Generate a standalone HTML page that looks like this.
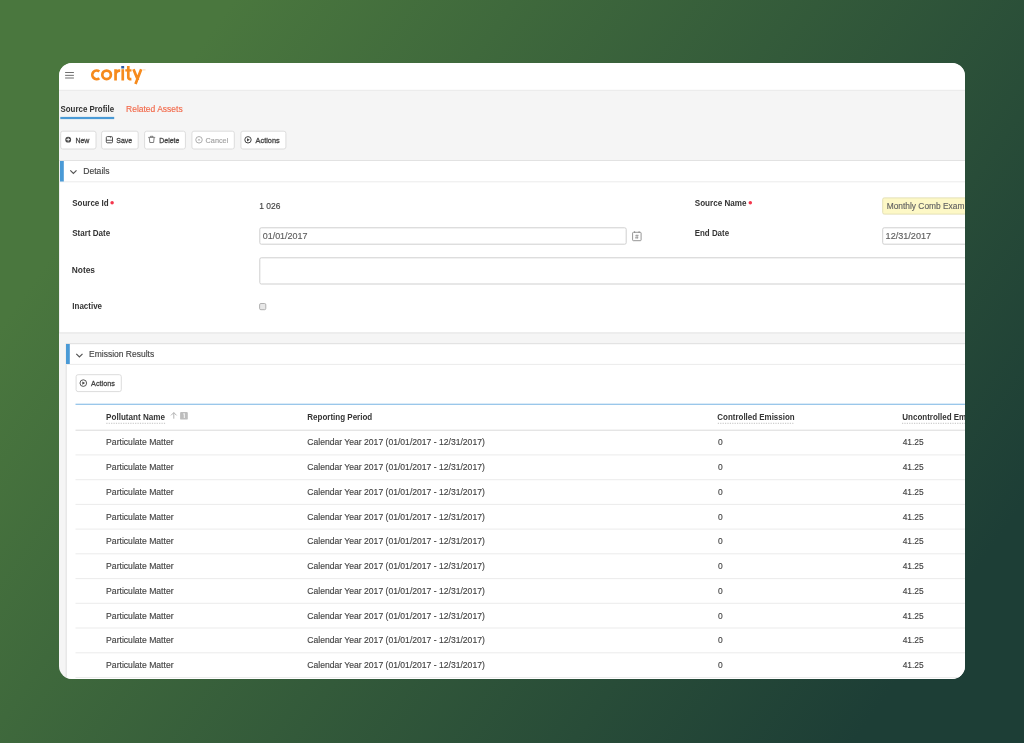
<!DOCTYPE html>
<html><head><meta charset="utf-8">
<style>
html,body{margin:0;padding:0;width:1024px;height:743px;overflow:hidden}
body{background:linear-gradient(125.5deg,#4a773e 15%,#1d3e36 89%);font-family:"Liberation Sans",sans-serif;position:relative}
#card{position:absolute;left:59px;top:63px;width:906px;height:616px;border-radius:13px;overflow:hidden;background:#f5f5f5}
#in{filter:blur(0.35px);position:absolute;left:-59px;top:-63px;width:1024px;height:743px}
#in svg{position:absolute;left:0;top:0}
.t{position:absolute;white-space:pre;line-height:1;transform-origin:0 50%;display:block}
</style></head><body>
<div id="card"><div id="in">
<svg width="1024" height="743" viewBox="0 0 1024 743">
<!-- header -->
<rect x="59" y="63" width="906" height="27" fill="#fff"/>
<rect x="59" y="89.8" width="906" height="0.9" fill="#e8e8e8"/>
<!-- hamburger -->
<g fill="#707070"><rect x="65.1" y="72" width="8.8" height="1"/><rect x="65.1" y="74.85" width="8.8" height="1"/><rect x="65.1" y="77.5" width="8.8" height="1"/></g>
<!-- logo -->
<g id="logo" fill="none" stroke="#f68a1c" stroke-width="2.7" stroke-linecap="butt">
<path d="M99.3 71.5 A4.3 4.3 0 1 0 99.3 78.2"/>
<circle cx="106.6" cy="74.85" r="4.3"/>
<path d="M115.55 80.5 V69.2 M115.55 74.8 Q115.7 70.5 120.2 70.7"/>
<path d="M122.75 80.5 V69.2"/>
<path d="M128.3 66.1 V77.4 Q128.3 79.3 131.4 79.1"/>
<path d="M125.3 70.4 H131.5" stroke-width="2.3"/>
<path d="M133.5 69.2 L138 80.3 M141.2 69.2 L135.5 83.9"/>
</g>
<rect x="121.25" y="66" width="2.9" height="2.5" fill="#2d5aa6"/>
<rect x="142.9" y="69.3" width="2.6" height="1.2" fill="#f68a1c" opacity="0.3"/>
<!-- tab underline -->
<rect x="60.3" y="116.9" width="53.9" height="2.2" fill="#4a9ad6"/>
<!-- toolbar buttons -->
<g fill="#fff" stroke="#dcdcdc" stroke-width="1">
<rect x="60.7" y="131.2" width="35.3" height="17.8" rx="2"/>
<rect x="101.6" y="131.2" width="36.6" height="17.8" rx="2"/>
<rect x="144.6" y="131.2" width="40.8" height="17.8" rx="2"/>
<rect x="191.9" y="131.2" width="42.4" height="17.8" rx="2"/>
<rect x="240.9" y="131.2" width="45" height="17.8" rx="2"/>
</g>
<!-- new icon -->
<circle cx="68.2" cy="139.65" r="2.9" fill="#4a4a4a"/>
<path d="M66.4 139.6 H70 M68.2 137.8 V141.4" stroke="#fff" stroke-width="0.9"/>
<!-- save icon -->
<g fill="none" stroke="#505050" stroke-width="1">
<rect x="106.3" y="136.6" width="6.2" height="6.2" rx="1"/>
<path d="M106.3 140.3 H112.5" stroke-width="0.9"/>
<path d="M110.7 136.6 V138.2" stroke-width="0.8"/>
</g>
<!-- trash icon -->
<g fill="none" stroke="#555" stroke-width="0.75">
<path d="M148.2 137.4 H155.2 M150.4 137.2 V136.3 H153 V137.2"/>
<path d="M149.3 138 L149.8 142.5 H153.6 L154.1 138"/>
</g>
<!-- cancel icon -->
<circle cx="199" cy="139.8" r="3.25" fill="none" stroke="#adadad" stroke-width="1"/>
<path d="M198.1 138.9 L199.9 140.7 M199.9 138.9 L198.1 140.7" stroke="#adadad" stroke-width="0.8"/>
<!-- actions icon -->
<circle cx="248" cy="139.8" r="3.2" fill="none" stroke="#444" stroke-width="1"/>
<path d="M247 138.2 L249.8 139.8 L247 141.4 Z" fill="#444"/>
<!-- details panel -->
<rect x="59" y="160.5" width="920" height="172.4" fill="#fff" stroke="#e2e2e2" stroke-width="1"/>
<rect x="59" y="181.3" width="920" height="1" fill="#ececec"/>
<rect x="60" y="161" width="3.8" height="20.5" fill="#4a9ad6"/>
<path d="M70.3 170.3 L73.4 173.4 L76.5 170.3" fill="none" stroke="#555" stroke-width="1.2"/>
<!-- asterisks -->
<g fill="#f4364c"><circle cx="112.1" cy="202.7" r="1.75"/><circle cx="750.3" cy="202.7" r="1.75"/></g>
<!-- inputs -->
<g fill="#fff" stroke="#cfcfcf" stroke-width="1">
<rect x="259.8" y="227.8" width="366.4" height="16.4" rx="1.5"/>
<rect x="259.8" y="257.8" width="720" height="26.2" rx="1.5"/>
<rect x="882.7" y="227.8" width="100" height="16.4" rx="1.5"/>
</g>
<rect x="882.7" y="197.9" width="100" height="16.2" rx="1.5" fill="#fdf8c6" stroke="#e4e0b6" stroke-width="1"/>
<!-- calendar icon -->
<g fill="none" stroke="#8a8a8a" stroke-width="0.9">
<rect x="632.6" y="232.3" width="8.5" height="8.4" rx="0.8"/>
<path d="M634.6 231.2 V233 M639.1 231.2 V233"/>
<path d="M635.3 235.6 H638.6 M635.1 237.7 H638.4 M636.4 234.6 L636 238.8 M637.8 234.6 L637.4 238.8" stroke-width="0.6"/>
</g>
<!-- checkbox -->
<rect x="259.6" y="303.5" width="6.2" height="6.2" rx="1.3" fill="#e8e8e8" stroke="#a8a8a8" stroke-width="0.9"/>
<!-- emission panel -->
<rect x="66.2" y="343.7" width="920" height="345" fill="#fff" stroke="#dedede" stroke-width="1"/>
<rect x="66.2" y="363.9" width="920" height="1" fill="#ececec"/>
<rect x="66" y="344" width="3.8" height="20" fill="#4a9ad6"/>
<path d="M76.3 353.8 L79.4 356.9 L82.5 353.8" fill="none" stroke="#555" stroke-width="1.2"/>
<rect x="76.1" y="374.7" width="45.2" height="16.9" rx="2" fill="#fff" stroke="#dcdcdc"/>
<circle cx="83.3" cy="383.1" r="3.3" fill="none" stroke="#444" stroke-width="0.9"/>
<path d="M82.3 381.5 L85.1 383.1 L82.3 384.7 Z" fill="#444"/>
<!-- table -->
<rect x="75.5" y="403.75" width="920" height="0.95" fill="#70b0e1"/>
<rect x="75.5" y="429.7" width="920" height="1" fill="#dadada"/>
<g fill="#ececec">
<rect x="75.5" y="454.4" width="920" height="1"/>
<rect x="75.5" y="479.2" width="920" height="1"/>
<rect x="75.5" y="503.9" width="920" height="1"/>
<rect x="75.5" y="528.6" width="920" height="1"/>
<rect x="75.5" y="553.3" width="920" height="1"/>
<rect x="75.5" y="578.1" width="920" height="1"/>
<rect x="75.5" y="602.8" width="920" height="1"/>
<rect x="75.5" y="627.5" width="920" height="1"/>
<rect x="75.5" y="652.3" width="920" height="1"/>
<rect x="75.5" y="677" width="920" height="1"/>
</g>
<!-- dotted underlines -->
<g stroke="#a8a8a8" stroke-width="0.7" stroke-dasharray="1.2 1.2">
<path d="M106.3 423.3 H165.8"/><path d="M717.8 423.3 H794.2"/><path d="M902 423.3 H1000"/>
</g>
<!-- sort arrow + badge -->
<path d="M173.8 418.7 V412.6 M171 415.4 L173.8 412.6 L176.6 415.4" fill="none" stroke="#aaa" stroke-width="0.9"/>
<rect x="180.1" y="411.9" width="7.7" height="7.7" rx="1.2" fill="#bdbdbd"/>
<path d="M183.3 414 L184.3 413.5 V418" fill="none" stroke="#fff" stroke-width="0.9"/>
</svg>
<span class="t" style="left:60px;top:105px;font-size:9px;font-weight:700;color:#333;transform:translateX(0.49px) scaleX(0.8777);">Source Profile</span>
<span class="t" style="left:126px;top:105px;font-size:9px;color:#f2694a;transform:translateX(0.07px) scaleX(0.9423);-webkit-text-stroke:0.15px #f2694a;">Related Assets</span>
<span class="t" style="left:75px;top:137px;font-size:8px;color:#444;transform:translateX(0.39px) scaleX(0.8716);-webkit-text-stroke:0.3px #444;">New</span>
<span class="t" style="left:116px;top:137px;font-size:8px;color:#444;transform:translateX(0.32px) scaleX(0.8689);-webkit-text-stroke:0.3px #444;">Save</span>
<span class="t" style="left:159px;top:137px;font-size:8px;color:#444;transform:translateX(0.32px) scaleX(0.8663);-webkit-text-stroke:0.3px #444;">Delete</span>
<span class="t" style="left:205px;top:137px;font-size:8px;color:#a2a2a2;transform:translateX(0.59px) scaleX(0.9106);-webkit-text-stroke:0.15px #a2a2a2;">Cancel</span>
<span class="t" style="left:255px;top:137px;font-size:8px;color:#444;transform:translateX(0.56px) scaleX(0.9189);-webkit-text-stroke:0.3px #444;">Actions</span>
<span class="t" style="left:83px;top:167px;font-size:9px;color:#444;transform:translateX(0.26px) scaleX(0.9538);-webkit-text-stroke:0.15px #444;">Details</span>
<span class="t" style="left:72px;top:199px;font-size:9px;font-weight:700;color:#333;transform:translateX(0.19px) scaleX(0.8879);">Source Id</span>
<span class="t" style="left:72px;top:229px;font-size:9px;font-weight:700;color:#333;transform:translateX(0.25px) scaleX(0.8929);">Start Date</span>
<span class="t" style="left:71px;top:266px;font-size:9px;font-weight:700;color:#333;transform:translateX(0.72px) scaleX(0.9303);">Notes</span>
<span class="t" style="left:72px;top:302px;font-size:9px;font-weight:700;color:#333;transform:translateX(0.32px) scaleX(0.8868);">Inactive</span>
<span class="t" style="left:259px;top:202px;font-size:9px;color:#444;transform:translateX(0.20px) scaleX(0.9386);-webkit-text-stroke:0.15px #444;">1 026</span>
<span class="t" style="left:262px;top:232px;font-size:9px;color:#606060;transform:translateX(0.68px) scaleX(0.9953);-webkit-text-stroke:0.15px #606060;">01/01/2017</span>
<span class="t" style="left:694px;top:199px;font-size:9px;font-weight:700;color:#333;transform:translateX(0.73px) scaleX(0.8989);">Source Name</span>
<span class="t" style="left:694px;top:229px;font-size:9px;font-weight:700;color:#333;transform:translateX(0.72px) scaleX(0.8802);">End Date</span>
<span class="t" style="left:886px;top:202px;font-size:9px;color:#626262;transform:translateX(0.73px) scaleX(0.9302);-webkit-text-stroke:0.15px #626262;">Monthly Comb Exam</span>
<span class="t" style="left:885px;top:232px;font-size:9px;color:#606060;transform:translateX(0.57px) scaleX(1.0101);-webkit-text-stroke:0.15px #606060;">12/31/2017</span>
<span class="t" style="left:89px;top:350px;font-size:9px;color:#444;transform:translateX(0.04px) scaleX(0.9442);-webkit-text-stroke:0.15px #444;">Emission Results</span>
<span class="t" style="left:91px;top:380px;font-size:8px;color:#444;transform:translateX(0.05px) scaleX(0.9055);-webkit-text-stroke:0.3px #444;">Actions</span>
<span class="t" style="left:106px;top:413px;font-size:9px;font-weight:700;color:#333;transform:translateX(0.11px) scaleX(0.8982);">Pollutant Name</span>
<span class="t" style="left:307px;top:413px;font-size:9px;font-weight:700;color:#333;transform:translateX(0.28px) scaleX(0.8892);">Reporting Period</span>
<span class="t" style="left:717px;top:413px;font-size:9px;font-weight:700;color:#333;transform:translateX(0.35px) scaleX(0.8827);">Controlled Emission</span>
<span class="t" style="left:902px;top:413px;font-size:9px;font-weight:700;color:#333;transform:translateX(0.29px) scaleX(0.8873);">Uncontrolled Em</span>
<span class="t" style="left:106px;top:438px;font-size:9px;color:#444;transform:translateX(0.11px) scaleX(0.9559);-webkit-text-stroke:0.15px #444;">Particulate Matter</span>
<span class="t" style="left:307px;top:438px;font-size:9px;color:#444;transform:translateX(0.30px) scaleX(0.9535);-webkit-text-stroke:0.15px #444;">Calendar Year 2017 (01/01/2017 - 12/31/2017)</span>
<span class="t" style="left:718px;top:438px;font-size:9px;color:#444;transform:translateX(0.04px) scaleX(0.9400);-webkit-text-stroke:0.15px #444;">0</span>
<span class="t" style="left:902px;top:438px;font-size:9px;color:#444;transform:translateX(0.65px) scaleX(0.9303);-webkit-text-stroke:0.15px #444;">41.25</span>
<span class="t" style="left:106px;top:463px;font-size:9px;color:#444;transform:translateX(0.11px) scaleX(0.9559);-webkit-text-stroke:0.15px #444;">Particulate Matter</span>
<span class="t" style="left:307px;top:463px;font-size:9px;color:#444;transform:translateX(0.30px) scaleX(0.9535);-webkit-text-stroke:0.15px #444;">Calendar Year 2017 (01/01/2017 - 12/31/2017)</span>
<span class="t" style="left:718px;top:463px;font-size:9px;color:#444;transform:translateX(0.04px) scaleX(0.9400);-webkit-text-stroke:0.15px #444;">0</span>
<span class="t" style="left:902px;top:463px;font-size:9px;color:#444;transform:translateX(0.65px) scaleX(0.9303);-webkit-text-stroke:0.15px #444;">41.25</span>
<span class="t" style="left:106px;top:488px;font-size:9px;color:#444;transform:translateX(0.11px) scaleX(0.9559);-webkit-text-stroke:0.15px #444;">Particulate Matter</span>
<span class="t" style="left:307px;top:488px;font-size:9px;color:#444;transform:translateX(0.30px) scaleX(0.9535);-webkit-text-stroke:0.15px #444;">Calendar Year 2017 (01/01/2017 - 12/31/2017)</span>
<span class="t" style="left:718px;top:488px;font-size:9px;color:#444;transform:translateX(0.04px) scaleX(0.9400);-webkit-text-stroke:0.15px #444;">0</span>
<span class="t" style="left:902px;top:488px;font-size:9px;color:#444;transform:translateX(0.65px) scaleX(0.9303);-webkit-text-stroke:0.15px #444;">41.25</span>
<span class="t" style="left:106px;top:513px;font-size:9px;color:#444;transform:translateX(0.11px) scaleX(0.9559);-webkit-text-stroke:0.15px #444;">Particulate Matter</span>
<span class="t" style="left:307px;top:513px;font-size:9px;color:#444;transform:translateX(0.30px) scaleX(0.9535);-webkit-text-stroke:0.15px #444;">Calendar Year 2017 (01/01/2017 - 12/31/2017)</span>
<span class="t" style="left:718px;top:513px;font-size:9px;color:#444;transform:translateX(0.04px) scaleX(0.9400);-webkit-text-stroke:0.15px #444;">0</span>
<span class="t" style="left:902px;top:513px;font-size:9px;color:#444;transform:translateX(0.65px) scaleX(0.9303);-webkit-text-stroke:0.15px #444;">41.25</span>
<span class="t" style="left:106px;top:537px;font-size:9px;color:#444;transform:translateX(0.11px) scaleX(0.9559);-webkit-text-stroke:0.15px #444;">Particulate Matter</span>
<span class="t" style="left:307px;top:537px;font-size:9px;color:#444;transform:translateX(0.30px) scaleX(0.9535);-webkit-text-stroke:0.15px #444;">Calendar Year 2017 (01/01/2017 - 12/31/2017)</span>
<span class="t" style="left:718px;top:537px;font-size:9px;color:#444;transform:translateX(0.04px) scaleX(0.9400);-webkit-text-stroke:0.15px #444;">0</span>
<span class="t" style="left:902px;top:537px;font-size:9px;color:#444;transform:translateX(0.65px) scaleX(0.9303);-webkit-text-stroke:0.15px #444;">41.25</span>
<span class="t" style="left:106px;top:562px;font-size:9px;color:#444;transform:translateX(0.11px) scaleX(0.9559);-webkit-text-stroke:0.15px #444;">Particulate Matter</span>
<span class="t" style="left:307px;top:562px;font-size:9px;color:#444;transform:translateX(0.30px) scaleX(0.9535);-webkit-text-stroke:0.15px #444;">Calendar Year 2017 (01/01/2017 - 12/31/2017)</span>
<span class="t" style="left:718px;top:562px;font-size:9px;color:#444;transform:translateX(0.04px) scaleX(0.9400);-webkit-text-stroke:0.15px #444;">0</span>
<span class="t" style="left:902px;top:562px;font-size:9px;color:#444;transform:translateX(0.65px) scaleX(0.9303);-webkit-text-stroke:0.15px #444;">41.25</span>
<span class="t" style="left:106px;top:587px;font-size:9px;color:#444;transform:translateX(0.11px) scaleX(0.9559);-webkit-text-stroke:0.15px #444;">Particulate Matter</span>
<span class="t" style="left:307px;top:587px;font-size:9px;color:#444;transform:translateX(0.30px) scaleX(0.9535);-webkit-text-stroke:0.15px #444;">Calendar Year 2017 (01/01/2017 - 12/31/2017)</span>
<span class="t" style="left:718px;top:587px;font-size:9px;color:#444;transform:translateX(0.04px) scaleX(0.9400);-webkit-text-stroke:0.15px #444;">0</span>
<span class="t" style="left:902px;top:587px;font-size:9px;color:#444;transform:translateX(0.65px) scaleX(0.9303);-webkit-text-stroke:0.15px #444;">41.25</span>
<span class="t" style="left:106px;top:612px;font-size:9px;color:#444;transform:translateX(0.11px) scaleX(0.9559);-webkit-text-stroke:0.15px #444;">Particulate Matter</span>
<span class="t" style="left:307px;top:612px;font-size:9px;color:#444;transform:translateX(0.30px) scaleX(0.9535);-webkit-text-stroke:0.15px #444;">Calendar Year 2017 (01/01/2017 - 12/31/2017)</span>
<span class="t" style="left:718px;top:612px;font-size:9px;color:#444;transform:translateX(0.04px) scaleX(0.9400);-webkit-text-stroke:0.15px #444;">0</span>
<span class="t" style="left:902px;top:612px;font-size:9px;color:#444;transform:translateX(0.65px) scaleX(0.9303);-webkit-text-stroke:0.15px #444;">41.25</span>
<span class="t" style="left:106px;top:636px;font-size:9px;color:#444;transform:translateX(0.11px) scaleX(0.9559);-webkit-text-stroke:0.15px #444;">Particulate Matter</span>
<span class="t" style="left:307px;top:636px;font-size:9px;color:#444;transform:translateX(0.30px) scaleX(0.9535);-webkit-text-stroke:0.15px #444;">Calendar Year 2017 (01/01/2017 - 12/31/2017)</span>
<span class="t" style="left:718px;top:636px;font-size:9px;color:#444;transform:translateX(0.04px) scaleX(0.9400);-webkit-text-stroke:0.15px #444;">0</span>
<span class="t" style="left:902px;top:636px;font-size:9px;color:#444;transform:translateX(0.65px) scaleX(0.9303);-webkit-text-stroke:0.15px #444;">41.25</span>
<span class="t" style="left:106px;top:661px;font-size:9px;color:#444;transform:translateX(0.11px) scaleX(0.9559);-webkit-text-stroke:0.15px #444;">Particulate Matter</span>
<span class="t" style="left:307px;top:661px;font-size:9px;color:#444;transform:translateX(0.30px) scaleX(0.9535);-webkit-text-stroke:0.15px #444;">Calendar Year 2017 (01/01/2017 - 12/31/2017)</span>
<span class="t" style="left:718px;top:661px;font-size:9px;color:#444;transform:translateX(0.04px) scaleX(0.9400);-webkit-text-stroke:0.15px #444;">0</span>
<span class="t" style="left:902px;top:661px;font-size:9px;color:#444;transform:translateX(0.65px) scaleX(0.9303);-webkit-text-stroke:0.15px #444;">41.25</span>
</div></div>
</body></html>
